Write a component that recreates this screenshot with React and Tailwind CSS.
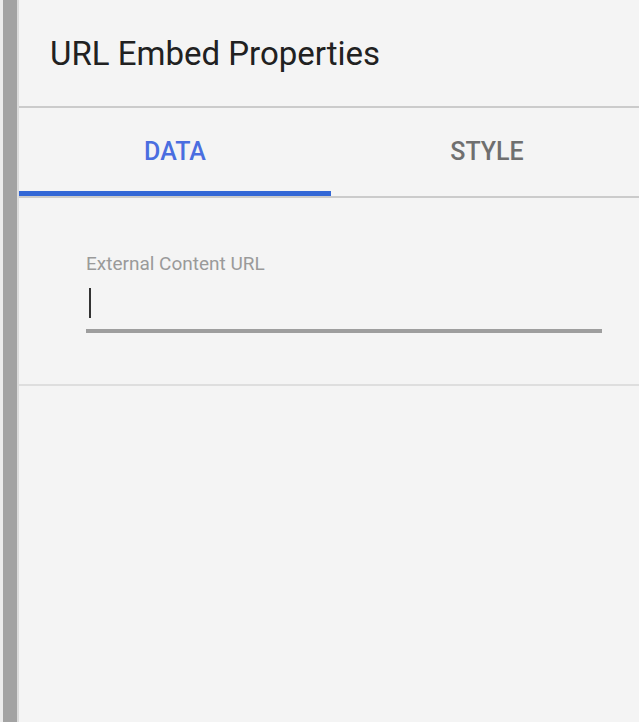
export default function App() {
  return (
    <div className="flex h-[722px] w-[639px] overflow-hidden bg-[#ececec] font-['Roboto','Liberation_Sans',sans-serif]">
      <div className="ml-[3px] w-[14px] shrink-0 bg-[#a3a3a3]" />
      <div className="w-[2px] shrink-0 bg-[#dcdcdc]" />
      <div className="flex w-[624px] shrink-0 flex-col bg-[#f4f4f4]">
        <header className="flex h-[108px] items-center border-b-2 border-[#cbcbcb] pl-[31px]">
          <h1 className="text-[33px] leading-none text-[#212121]">URL Embed Properties</h1>
        </header>
        <nav className="flex h-[90px] border-b-2 border-[#cbcbcb]">
          <button className="flex w-[312px] items-center justify-center border-b-[5px] border-[#3367d6] pt-[5px] text-[25px] font-medium text-[#4a6ee0]">
            DATA
          </button>
          <button className="flex w-[312px] items-center justify-center text-[25px] font-medium text-[#6f6f6f]">
            STYLE
          </button>
        </nav>
        <section className="border-b-2 border-[#dedede] pb-[51px] pl-[67px] pt-[56px]">
          <label className="block text-[19px] leading-none text-[#9a9a9a]">External Content URL</label>
          <div className="flex h-[60px] w-[516px] items-center border-b-4 border-[#9e9e9e] pl-[3px] pt-[3px]">
            <span className="h-[30px] w-[2px] bg-[#333333]" />
          </div>
        </section>
      </div>
    </div>
  );
}
